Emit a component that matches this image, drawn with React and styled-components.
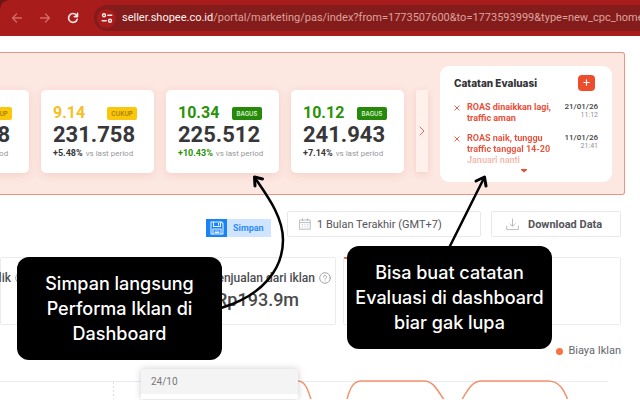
import React from "react"
import styled, { createGlobalStyle, css } from "styled-components"

const GlobalStyle = createGlobalStyle`
  * {
    box-sizing: border-box;
  }
  body {
    margin: 0;
    overflow: hidden;
    background: #fff;
    color: #4a4a4c;
    font-family: Roboto, "Liberation Sans", sans-serif;
  }
  button {
    margin: 0;
    padding: 0;
    border: 0;
    background: none;
    color: inherit;
    font: inherit;
    cursor: pointer;
  }
  p, h2, h3, ul {
    margin: 0;
    padding: 0;
  }
  svg {
    display: block;
    flex: none;
  }
`

const Page = styled.div`
  position: relative;
  min-height: 100vh;
  overflow: hidden;
`

/* browser bar */
const BrowserBar = styled.header`
  display: flex;
  align-items: center;
  height: 36px;
  padding-left: 10px;
  background: radial-gradient(circle at 100% 100%, #a81c1c 7px, #6b1515 8px) 0
      0 / 8px 8px no-repeat,
    #a81c1c;
`
const NavButton = styled.button`
  display: flex;
  align-items: center;
  justify-content: center;
  width: 14px;
  height: 14px;
  margin-right: 14px;
  color: ${({ $active }) => ($active ? "#ffe9e6" : "#d56a66")};
`
const Address = styled.div`
  display: flex;
  flex: 1;
  align-items: center;
  gap: 6px;
  min-width: 0;
  height: 26px;
  padding-left: 3px;
  border-radius: 13px 0 0 13px;
  background: #841c1c;
  overflow: hidden;
`
const SiteInfo = styled.button`
  display: flex;
  flex: none;
  align-items: center;
  justify-content: center;
  width: 19px;
  height: 19px;
  border-radius: 50%;
  background: #a81c1c;
  color: #ffe9e6;
`
const Url = styled.span`
  color: #dda29d;
  font-size: 11px;
  line-height: 16px;
  white-space: nowrap;
`
const Host = styled.span`
  color: #fff1ef;
`

/* highlighted panel */
const Panel = styled.section`
  display: flex;
  align-items: center;
  gap: 12px;
  height: 143px;
  margin: 16px 15px 0 0;
  padding-right: 12px;
  border: 1px solid #ec9484;
  border-left: 0;
  border-radius: 0 3px 3px 0;
  background: #fde7e1;
`
const Cards = styled.div`
  display: flex;
  flex: 1;
  justify-content: flex-end;
  gap: 12px;
  min-width: 0;
  margin-top: 16px;
`
const Card = styled.article`
  flex: none;
  width: 113px;
  height: 83px;
  padding: 14px 12px 0;
  border-radius: 5px;
  background: #fff;
  box-shadow: 0 2px 8px rgba(180, 100, 80, 0.16);
`
const CardTop = styled.div`
  display: flex;
  align-items: center;
  justify-content: space-between;
  padding-right: 5px;
`
const tones = {
  good: { text: "#2a9208", badge: "#26890b", label: "#d9f2cf" },
  fair: { text: "#f6bf26", badge: "#fbc70b", label: "#a87e00" },
}
const Score = styled.span`
  color: ${({ $tone }) => tones[$tone].text};
  font-size: 16px;
  font-weight: 700;
  line-height: 18px;
`
const Badge = styled.span`
  width: 30px;
  border-radius: 2px;
  background: ${({ $tone }) => tones[$tone].badge};
  color: ${({ $tone }) => tones[$tone].label};
  font-family: Inter, sans-serif;
  font-size: 6px;
  font-weight: 600;
  line-height: 13px;
  text-align: center;
`
const Total = styled.p`
  color: #37373a;
  font-size: 22px;
  font-weight: 700;
  line-height: 25px;
`
const Change = styled.p`
  color: #98989b;
  font-size: 8px;
  line-height: 13px;
  white-space: nowrap;
`
const Percent = styled.b`
  margin-right: 3px;
  color: ${({ $green }) => ($green ? "#2a9208" : "#37373a")};
  font-size: 9px;
`
const NextButton = styled.button`
  display: flex;
  flex: none;
  align-items: center;
  justify-content: center;
  width: 12px;
  height: 82px;
  margin-top: 14px;
  background: #fff0eb;
  color: #ec6a58;
  box-shadow: 0 2px 7px rgba(180, 100, 80, 0.18);
`

/* notes */
const Notes = styled.aside`
  flex: none;
  width: 172px;
  height: 116px;
  padding: 9px 14px 0;
  border-radius: 9px;
  background: #fff;
`
const NotesHead = styled.div`
  display: flex;
  align-items: center;
  justify-content: space-between;
  padding-right: 3px;
`
const NotesTitle = styled.h2`
  color: #333336;
  font-family: Inter, sans-serif;
  font-size: 10px;
  font-weight: 800;
  line-height: 16px;
`
const AddButton = styled.button`
  display: flex;
  align-items: center;
  justify-content: center;
  width: 17px;
  height: 16px;
  border-radius: 4px;
  background: #ee4d2d;
  color: #fff;
`
const NoteList = styled.ul`
  display: flex;
  flex-direction: column;
  gap: 9px;
  padding-top: 11px;
  list-style: none;
`
const Note = styled.li`
  display: flex;
  align-items: flex-start;
`
const RemoveButton = styled.button`
  width: 13px;
  padding-top: 3px;
  color: #e5533d;
`
const NoteText = styled.p`
  flex: 1;
  color: #e8503a;
  font-size: 9px;
  font-weight: 700;
  line-height: 11px;
  white-space: nowrap;
  ${({ $fade }) =>
    $fade &&
    css`
      background: linear-gradient(#e8503a 55%, #f7b9ad 80%);
      background-clip: text;
      -webkit-background-clip: text;
      color: transparent;
    `}
`
const NoteDate = styled.div`
  color: #3f3f42;
  font-size: 8px;
  font-weight: 500;
  line-height: 9px;
  text-align: right;
`
const NoteTime = styled.div`
  color: #8f8f92;
  font-size: 7px;
  font-weight: 400;
  line-height: 8px;
`
const More = styled.button`
  display: block;
  margin: 0 auto;
  padding-right: 4px;
  color: #e8503a;
`

/* toolbar */
const Toolbar = styled.div`
  display: flex;
  align-items: flex-start;
  justify-content: flex-end;
  gap: 10px;
  padding: 16px 19px 0 0;
`
const SaveButton = styled.button`
  display: flex;
  align-items: center;
  width: 65px;
  height: 18px;
  margin: 8px 6px 0 0;
  background: #cfe5ff;
  color: #2f8cf5;
  font-size: 9px;
  font-weight: 700;
`
const SaveIcon = styled.span`
  display: flex;
  align-items: center;
  justify-content: center;
  width: 21px;
  height: 18px;
  margin-right: 6px;
  background: #1a82f7;
  color: #e4f1ff;
`
const ToolButton = styled.button`
  display: flex;
  align-items: center;
  gap: ${({ $wide }) => ($wide ? "6px" : "9px")};
  width: ${({ $wide }) => ($wide ? "194px" : "130px")};
  height: 26px;
  padding-left: ${({ $wide }) => ($wide ? "11px" : "14px")};
  border: 1px solid #e8e8ea;
  border-radius: 2px;
  font-size: 11px;
  font-weight: ${({ $wide }) => ($wide ? 400 : 700)};
  color: #55555a;
  white-space: nowrap;

  svg {
    color: #bcbcc0;
  }
`

/* metrics */
const Metrics = styled.div`
  display: flex;
  gap: 7px;
  padding: 20px 19px 0 0;
`
const Metric = styled.section`
  flex: ${({ $width }) => ($width ? "none" : 1)};
  width: ${({ $width }) => $width || "auto"};
  min-width: 0;
  height: 68px;
  padding: 13px 4px 0 9px;
  border: 1px solid #ebebed;
  border-radius: 2px;
  ${({ $selected }) =>
    $selected &&
    css`
      background: linear-gradient(#ee6a4d, #ee6a4d) 0 0 / 10px 2px no-repeat
        border-box;
      border-top-color: rgba(0, 0, 0, 0.08);
    `}
`
const MetricName = styled.h3`
  display: flex;
  align-items: center;
  justify-content: flex-end;
  gap: 4px;
  color: #4c4c50;
  font-size: 12px;
  font-weight: 500;
  line-height: 14px;
  white-space: nowrap;

  svg {
    color: #a5a5a9;
  }
`
const MetricValue = styled.p`
  padding: 3px 0 0 3px;
  font-size: 18px;
  font-weight: 500;
  line-height: 24px;
`

/* chart */
const Legend = styled.div`
  display: flex;
  align-items: center;
  justify-content: flex-end;
  gap: 5px;
  padding: 18px 19px 0 0;
  color: #66666a;
  font-size: 11px;
  line-height: 16px;

  &::before {
    width: 7px;
    height: 7px;
    border-radius: 50%;
    background: #f9733f;
    content: "";
  }
`
const Chart = styled.div`
  position: relative;
  padding-top: 10px;
`
const ChartTooltip = styled.div`
  position: absolute;
  top: 10px;
  left: 141px;
  width: 157px;
  height: 30px;
  background: #fff;
  box-shadow: 0 0 7px rgba(0, 0, 0, 0.2);
`
const TooltipDate = styled.div`
  padding-left: 10px;
  background: #f4f4f4;
  color: #77777a;
  font-size: 10px;
  line-height: 25px;
`

/* annotations */
const Callout = styled.p`
  position: absolute;
  top: ${({ $top }) => $top}px;
  left: ${({ $left }) => $left}px;
  width: 205px;
  padding: 14px 0;
  border-radius: 12px;
  background: #000;
  color: #fff;
  font-family: Inter, sans-serif;
  font-size: 18px;
  font-weight: 500;
  line-height: 25px;
  text-align: center;
  white-space: nowrap;
`
const Arrows = styled.svg`
  position: absolute;
  top: 0;
  left: 0;
  pointer-events: none;
`

const cards = [
  { score: "8.86", total: "219.718", change: "+4.12%", tone: "fair" },
  { score: "9.14", total: "231.758", change: "+5.48%", tone: "fair" },
  {
    score: "10.34",
    total: "225.512",
    change: "+10.43%",
    tone: "good",
    green: true,
  },
  { score: "10.12", total: "241.943", change: "+7.14%", tone: "good" },
]

const notes = [
  {
    lines: ["ROAS dinaikkan lagi,", "traffic aman"],
    date: "21/01/26",
    time: "11:12",
  },
  {
    lines: ["ROAS naik, tunggu", "traffic tanggal 14-20", "Januari nanti"],
    date: "11/01/26",
    time: "21:41",
    fade: true,
  },
]

const Stroke = ({ size = 12, height, width = 1, children }) => (
  <svg
    width={size}
    height={height || size}
    viewBox={`0 0 ${size} ${height || size}`}
    fill="none"
    stroke="currentColor"
    strokeWidth={width}
    strokeLinecap="round"
    strokeLinejoin="round"
    aria-hidden="true"
  >
    {children}
  </svg>
)

const HelpIcon = () => (
  <Stroke size={12}>
    <circle cx="6" cy="6" r="5.3" />
    <path d="M4.5 4.8a1.5 1.5 0 1 1 2.2 1.3c-.5.3-.7.5-.7 1.1M6 8.9v.1" />
  </Stroke>
)

const App = () => (
  <Page>
    <GlobalStyle />
    <BrowserBar>
      <NavButton aria-label="Back">
        <Stroke width={1.3}>
          <path d="M10.500 6h-9M5.500 2l-4 4 4 4" />
        </Stroke>
      </NavButton>
      <NavButton aria-label="Forward">
        <Stroke width={1.3}>
          <path d="M1.500 6h9M6.500 2l4 4-4 4" />
        </Stroke>
      </NavButton>
      <NavButton aria-label="Reload" $active>
        <Stroke width={1.6}>
          <path d="M10.2 7.2A4.4 4.4 0 1 1 9.4 3.2L10.4 4.4M10.5 1.3v3.3H7.3" />
        </Stroke>
      </NavButton>
      <Address>
        <SiteInfo aria-label="Site information">
          <Stroke width={1.4}>
            <circle cx="3" cy="3.2" r="1.5" />
            <path d="M6.8 3.2h4M1.2 8.8h4" />
            <circle cx="9" cy="8.8" r="1.5" />
          </Stroke>
        </SiteInfo>
        <Url>
          <Host>seller.shopee.co.id</Host>
          /portal/marketing/pas/index?from=1773507600&amp;to=1773593999&amp;type=new_cpc_homepage
        </Url>
      </Address>
    </BrowserBar>

    <Panel>
      <Cards>
        {cards.map(({ score, total, change, tone, green }) => (
          <Card key={score}>
            <CardTop>
              <Score $tone={tone}>{score}</Score>
              <Badge $tone={tone}>{tone === "good" ? "BAGUS" : "CUKUP"}</Badge>
            </CardTop>
            <Total>{total}</Total>
            <Change>
              <Percent $green={green}>{change}</Percent>
              vs last period
            </Change>
          </Card>
        ))}
      </Cards>
      <NextButton aria-label="Next">
        <Stroke size={6} height={10}>
          <path d="M1 1l4 4-4 4" />
        </Stroke>
      </NextButton>
      <Notes>
        <NotesHead>
          <NotesTitle>Catatan Evaluasi</NotesTitle>
          <AddButton aria-label="Tambah catatan">
            <Stroke size={7} width={1.2}>
              <path d="M3.5 .8v5.4M.8 3.5h5.4" />
            </Stroke>
          </AddButton>
        </NotesHead>
        <NoteList>
          {notes.map(({ lines, date, time, fade }) => (
            <Note key={date}>
              <RemoveButton aria-label="Hapus catatan">
                <Stroke size={6} width={0.9}>
                  <path d="M.8 .8l4.4 4.4M5.2 .8L.8 5.2" />
                </Stroke>
              </RemoveButton>
              <NoteText $fade={fade}>
                {lines.map((line, i) => (
                  <React.Fragment key={line}>
                    {i > 0 && <br />}
                    {line}
                  </React.Fragment>
                ))}
              </NoteText>
              <NoteDate>
                {date}
                <NoteTime>{time}</NoteTime>
              </NoteDate>
            </Note>
          ))}
        </NoteList>
        <More aria-label="Lainnya">
          <svg width="6" height="8" viewBox="0 0 6 8" aria-hidden="true">
            <path d="M0 3h6v1L3 6.500 0 4z" fill="currentColor" />
          </svg>
        </More>
      </Notes>
    </Panel>

    <Toolbar>
      <SaveButton>
        <SaveIcon>
          <Stroke size={14} width={1.1}>
            <path d="M1 1h10.5L13 2.5V13H1z" />
            <path d="M3.5 1v4.5h7V1M8.5 2.3v1.7M3 13V8h8v5M5 10h4M5 11.6h4" />
          </Stroke>
        </SaveIcon>
        Simpan
      </SaveButton>
      <ToolButton $wide>
        <Stroke size={12}>
          <path d="M.8 2h10.4v9.2H.8zM.8 4.6h10.4M3.5 .7v2M8.5 .7v2" />
          <path
            d="M3 6.7h6.5M3 8.9h6.5"
            strokeDasharray="1 1.6"
            strokeLinecap="butt"
          />
        </Stroke>
        1 Bulan Terakhir (GMT+7)
      </ToolButton>
      <ToolButton>
        <Stroke size={13}>
          <path d="M6.5 1v7M4 5.8l2.5 2.5L9 5.8M.7 8v3.6h11.6V8" />
        </Stroke>
        Download Data
      </ToolButton>
    </Toolbar>

    <Metrics>
      <Metric>
        <MetricName>
          Klik <HelpIcon />
        </MetricName>
      </Metric>
      <Metric $width="157px" />
      <Metric $width="133px">
        <MetricName>
          Penjualan dari iklan <HelpIcon />
        </MetricName>
        <MetricValue>Rp193.9m</MetricValue>
      </Metric>
      <Metric $width="278px" $selected />
    </Metrics>

    <Legend>Biaya Iklan</Legend>
    <Chart>
      <svg
        width="640"
        height="30"
        viewBox="0 370 640 30"
        fill="none"
        aria-hidden="true"
      >
        <path d="M0 382.5h608" stroke="#e9ebf5" />
        <path d="M113.5 383v20" stroke="#dddde0" strokeDasharray="2 2" />
        <path
          d="M298 382c7 0 10 8 14 22M346 404c3-12 6-22 15-22h63c9 0 13 8 22 22M460 404c8-14 12-22 22-22h66c11 0 16 8 21 22"
          stroke="#f5906c"
          strokeWidth="1.5"
        />
      </svg>
      <ChartTooltip>
        <TooltipDate>24/10</TooltipDate>
      </ChartTooltip>
    </Chart>

    <Arrows
      width="640"
      height="400"
      viewBox="0 0 640 400"
      fill="none"
      stroke="#000"
      strokeLinecap="round"
      strokeLinejoin="round"
      aria-hidden="true"
    >
      <path
        d="M221 308C264 295 283 268 283 240C283 217 268 197 255 178"
        strokeWidth="2.5"
      />
      <path d="M255 186l-.5-9 8 2" strokeWidth="3" />
      <path d="M449 248L484 178" strokeWidth="2.5" />
      <path d="M476 181l8.500-4 1.500 9" strokeWidth="3" />
    </Arrows>
    <Callout $top={257} $left={17}>
      Simpan langsung
      <br />
      Performa Iklan di
      <br />
      Dashboard
    </Callout>
    <Callout $top={246} $left={347}>
      Bisa buat catatan
      <br />
      Evaluasi di dashboard
      <br />
      biar gak lupa
    </Callout>
  </Page>
)

export default App
